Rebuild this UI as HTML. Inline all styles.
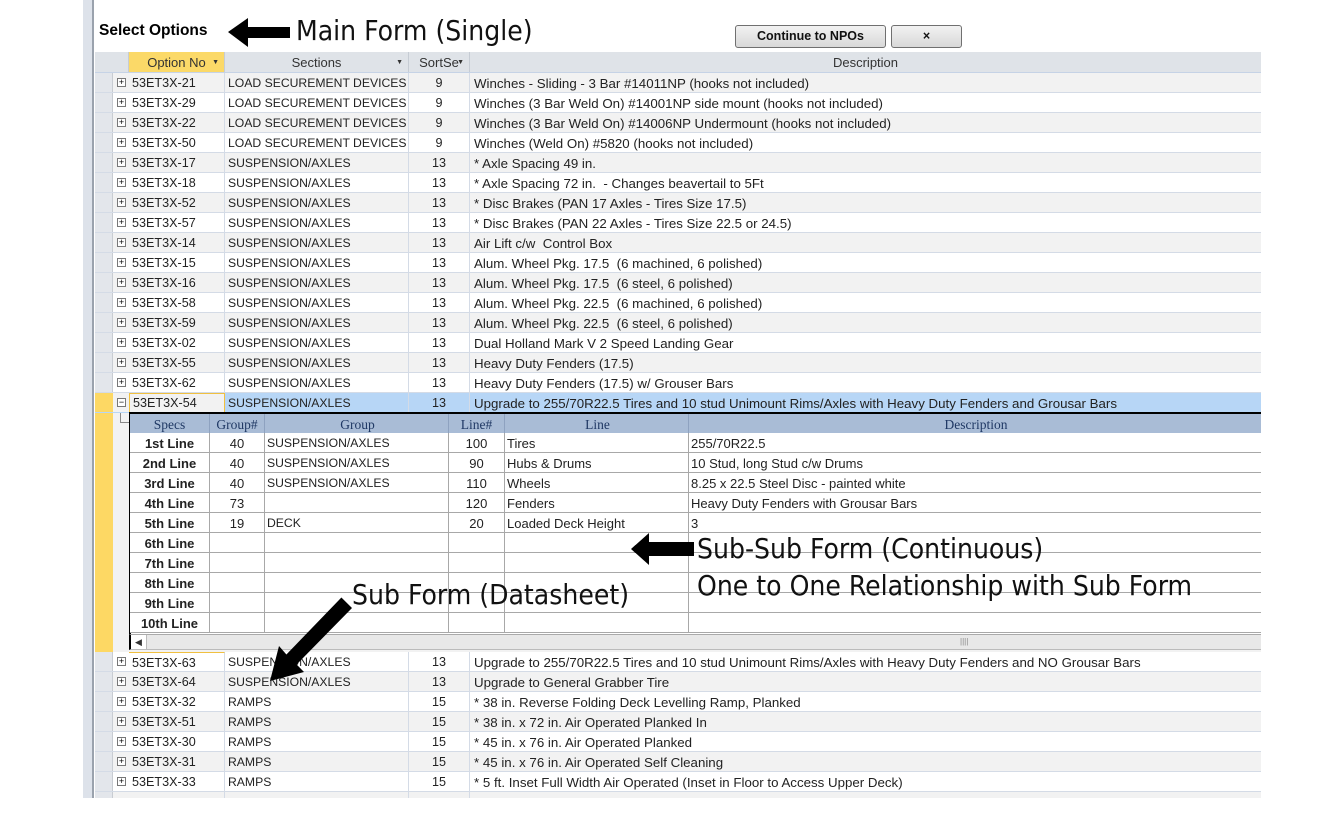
<!DOCTYPE html>
<html><head><meta charset="utf-8"><style>
*{margin:0;padding:0;box-sizing:border-box}
body{width:1344px;height:816px;background:#fff;position:relative;overflow:hidden;font-family:"Liberation Sans",sans-serif;font-size:12.6px;color:#222}
.abs{position:absolute}
.r{position:absolute;left:95px;width:1166px;height:20px;border-bottom:1px solid #d4dbe6;display:flex;line-height:21px}
.r div{height:19px;white-space:nowrap;overflow:hidden}
.sel{width:18px;background:#e3e6eb;border-right:1px solid #c8ccd2}
.ex{width:16px;position:relative}
.ex i{position:absolute;left:4px;top:5px;width:9px;height:9px;border:1px solid #777;background:#fff;font-style:normal;font-size:9px;line-height:7px;text-align:center;color:#000}
.op{width:96px;padding-left:3px;border-right:1px solid #d4dbe6}
.se{width:184px;padding-left:3px;border-right:1px solid #d4dbe6;font-size:12.2px}
.so{width:61px;text-align:center;border-right:1px solid #d4dbe6}
.de{width:791px;padding-left:4px;font-size:13.3px}
.g{background:#f2f2f2}
.w{background:#fff}
.hd{position:absolute;left:95px;top:52px;width:1166px;height:21px;background:#dfe3e8;border-bottom:1px solid #c6d3e6;display:flex;line-height:21px;color:#333;font-size:13px}
.hd div{height:20px;border-right:1px solid #c6ccd4;text-align:center;position:relative}
.dd{position:absolute;right:5px;top:0;font-size:7px}
.sr{position:absolute;left:130px;width:1131px;height:20px;display:flex;border-bottom:1px solid #a8a8a8;background:#fff;line-height:21px;font-size:13px}
.sr div{height:19px;border-right:1px solid #a8a8a8;white-space:nowrap;overflow:hidden}
.c1{width:80px;text-align:center;font-weight:bold}
.c2{width:55px;text-align:center}
.c3{width:184px;padding-left:2px;font-size:12.2px}
.c4{width:56px;text-align:center}
.c5{width:184px;padding-left:2px}
.c6{width:572px;padding-left:2px;border-right:none!important}
.ann{position:absolute;font-family:"DejaVu Sans Condensed","Liberation Sans",sans-serif;color:#111;font-size:28px;white-space:nowrap}
</style></head><body>
<div class="abs" style="left:83px;top:0;width:9px;height:798px;background:#dde2ea"></div>
<div class="abs" style="left:92px;top:0;width:2px;height:798px;background:#9aa2ad"></div>
<div class="abs" style="left:95px;top:0;width:1166px;height:52px;background:#fff"></div>
<div class="abs" style="left:99px;top:22px;font-weight:bold;font-size:15.5px;color:#000">Select Options</div>
<svg class="abs" style="left:226px;top:16px" width="66" height="34"><polygon points="2,16 22,2 22,11 64,11 64,22 22,22 22,31" fill="#000"/></svg>
<div class="ann" style="left:296px;top:14px">Main Form (Single)</div>
<div class="abs" style="left:735px;top:25px;width:151px;height:23px;border:1px solid #707070;border-radius:3px;background:linear-gradient(#f2f2f2,#d8d8d8);text-align:center;line-height:21px;font-weight:bold;font-size:12.5px;color:#111">Continue to NPOs</div>
<div class="abs" style="left:891px;top:25px;width:71px;height:23px;border:1px solid #707070;border-radius:3px;background:linear-gradient(#f2f2f2,#d8d8d8);text-align:center;line-height:21px;font-weight:bold;font-size:12.5px;color:#111">×</div>

<div class="hd"><div style="width:34px;background:#dfe3e8"></div><div style="width:96px;background:#fbd968">Option No<span class="dd">▼</span></div><div style="width:184px">Sections<span class="dd">▼</span></div><div style="width:61px">SortSe<span class="dd">▼</span></div><div style="width:791px;border:none">Description</div></div>

<div class="r g" style="top:73px"><div class="sel"></div><div class="ex"><i>+</i></div><div class="op">53ET3X-21</div><div class="se">LOAD SECUREMENT DEVICES</div><div class="so">9</div><div class="de">Winches - Sliding - 3 Bar #14011NP (hooks not included)</div></div>
<div class="r w" style="top:93px"><div class="sel"></div><div class="ex"><i>+</i></div><div class="op">53ET3X-29</div><div class="se">LOAD SECUREMENT DEVICES</div><div class="so">9</div><div class="de">Winches (3 Bar Weld On) #14001NP side mount (hooks not included)</div></div>
<div class="r g" style="top:113px"><div class="sel"></div><div class="ex"><i>+</i></div><div class="op">53ET3X-22</div><div class="se">LOAD SECUREMENT DEVICES</div><div class="so">9</div><div class="de">Winches (3 Bar Weld On) #14006NP Undermount (hooks not included)</div></div>
<div class="r w" style="top:133px"><div class="sel"></div><div class="ex"><i>+</i></div><div class="op">53ET3X-50</div><div class="se">LOAD SECUREMENT DEVICES</div><div class="so">9</div><div class="de">Winches (Weld On) #5820 (hooks not included)</div></div>
<div class="r g" style="top:153px"><div class="sel"></div><div class="ex"><i>+</i></div><div class="op">53ET3X-17</div><div class="se">SUSPENSION/AXLES</div><div class="so">13</div><div class="de">* Axle Spacing 49 in.</div></div>
<div class="r w" style="top:173px"><div class="sel"></div><div class="ex"><i>+</i></div><div class="op">53ET3X-18</div><div class="se">SUSPENSION/AXLES</div><div class="so">13</div><div class="de">* Axle Spacing 72 in.&nbsp; - Changes beavertail to 5Ft</div></div>
<div class="r g" style="top:193px"><div class="sel"></div><div class="ex"><i>+</i></div><div class="op">53ET3X-52</div><div class="se">SUSPENSION/AXLES</div><div class="so">13</div><div class="de">* Disc Brakes (PAN 17 Axles - Tires Size 17.5)</div></div>
<div class="r w" style="top:213px"><div class="sel"></div><div class="ex"><i>+</i></div><div class="op">53ET3X-57</div><div class="se">SUSPENSION/AXLES</div><div class="so">13</div><div class="de">* Disc Brakes (PAN 22 Axles - Tires Size 22.5 or 24.5)</div></div>
<div class="r g" style="top:233px"><div class="sel"></div><div class="ex"><i>+</i></div><div class="op">53ET3X-14</div><div class="se">SUSPENSION/AXLES</div><div class="so">13</div><div class="de">Air Lift c/w&nbsp; Control Box</div></div>
<div class="r w" style="top:253px"><div class="sel"></div><div class="ex"><i>+</i></div><div class="op">53ET3X-15</div><div class="se">SUSPENSION/AXLES</div><div class="so">13</div><div class="de">Alum. Wheel Pkg. 17.5&nbsp; (6 machined, 6 polished)</div></div>
<div class="r g" style="top:273px"><div class="sel"></div><div class="ex"><i>+</i></div><div class="op">53ET3X-16</div><div class="se">SUSPENSION/AXLES</div><div class="so">13</div><div class="de">Alum. Wheel Pkg. 17.5&nbsp; (6 steel, 6 polished)</div></div>
<div class="r w" style="top:293px"><div class="sel"></div><div class="ex"><i>+</i></div><div class="op">53ET3X-58</div><div class="se">SUSPENSION/AXLES</div><div class="so">13</div><div class="de">Alum. Wheel Pkg. 22.5&nbsp; (6 machined, 6 polished)</div></div>
<div class="r g" style="top:313px"><div class="sel"></div><div class="ex"><i>+</i></div><div class="op">53ET3X-59</div><div class="se">SUSPENSION/AXLES</div><div class="so">13</div><div class="de">Alum. Wheel Pkg. 22.5&nbsp; (6 steel, 6 polished)</div></div>
<div class="r w" style="top:333px"><div class="sel"></div><div class="ex"><i>+</i></div><div class="op">53ET3X-02</div><div class="se">SUSPENSION/AXLES</div><div class="so">13</div><div class="de">Dual Holland Mark V 2 Speed Landing Gear</div></div>
<div class="r g" style="top:353px"><div class="sel"></div><div class="ex"><i>+</i></div><div class="op">53ET3X-55</div><div class="se">SUSPENSION/AXLES</div><div class="so">13</div><div class="de">Heavy Duty Fenders (17.5)</div></div>
<div class="r w" style="top:373px"><div class="sel"></div><div class="ex"><i>+</i></div><div class="op">53ET3X-62</div><div class="se">SUSPENSION/AXLES</div><div class="so">13</div><div class="de">Heavy Duty Fenders (17.5) w/ Grouser Bars</div></div>
<div class="r" style="top:393px;background:#b7d6f6;border-bottom:none"><div class="sel" style="background:#fdd864;border:none"></div><div class="ex" style="background:#f2f2f2"><i>−</i></div><div class="op" style="background:#f2f2f2;border:1px solid #f0c040;height:20px;line-height:19px">53ET3X-54</div><div class="se">SUSPENSION/AXLES</div><div class="so">13</div><div class="de">Upgrade to 255/70R22.5 Tires and 10 stud Unimount Rims/Axles with Heavy Duty Fenders and Grousar Bars</div></div>
<div class="abs" style="left:95px;top:413px;width:18px;height:239px;background:#fdd864"></div>
<div class="abs" style="left:113px;top:413px;width:1148px;height:239px;background:#f2f2f2"></div>
<div class="abs" style="left:120px;top:413px;width:10px;height:10px;border-left:1px solid #888;border-bottom:1px solid #888"></div>
<div class="abs" style="left:129px;top:412px;width:1132px;height:222px;background:#fff;border-left:2px solid #000;border-top:2px solid #000"></div>
<div class="sr" style="top:414px;background:#a9bcd6;font-family:'Liberation Serif',serif;font-size:13.5px;color:#1f3864;border-bottom:1px solid #a8a8a8"><div class="c1" style="font-weight:normal;border-color:#8ea2c0">Specs</div><div class="c2" style="border-color:#8ea2c0">Group#</div><div class="c3" style="text-align:center;border-color:#8ea2c0;font-size:13.5px">Group</div><div class="c4" style="border-color:#8ea2c0">Line#</div><div class="c5" style="text-align:center;border-color:#8ea2c0">Line</div><div class="c6" style="text-align:center">Description</div></div>
<div class="sr" style="top:433px"><div class="c1">1st Line</div><div class="c2">40</div><div class="c3">SUSPENSION/AXLES</div><div class="c4">100</div><div class="c5">Tires</div><div class="c6">255/70R22.5</div></div>
<div class="sr" style="top:453px"><div class="c1">2nd Line</div><div class="c2">40</div><div class="c3">SUSPENSION/AXLES</div><div class="c4">90</div><div class="c5">Hubs &amp; Drums</div><div class="c6">10 Stud, long Stud c/w Drums</div></div>
<div class="sr" style="top:473px"><div class="c1">3rd Line</div><div class="c2">40</div><div class="c3">SUSPENSION/AXLES</div><div class="c4">110</div><div class="c5">Wheels</div><div class="c6">8.25 x 22.5 Steel Disc - painted white</div></div>
<div class="sr" style="top:493px"><div class="c1">4th Line</div><div class="c2">73</div><div class="c3"></div><div class="c4">120</div><div class="c5">Fenders</div><div class="c6">Heavy Duty Fenders with Grousar Bars</div></div>
<div class="sr" style="top:513px"><div class="c1">5th Line</div><div class="c2">19</div><div class="c3">DECK</div><div class="c4">20</div><div class="c5">Loaded Deck Height</div><div class="c6">3</div></div>
<div class="sr" style="top:533px"><div class="c1">6th Line</div><div class="c2"></div><div class="c3"></div><div class="c4"></div><div class="c5"></div><div class="c6"></div></div>
<div class="sr" style="top:553px"><div class="c1">7th Line</div><div class="c2"></div><div class="c3"></div><div class="c4"></div><div class="c5"></div><div class="c6"></div></div>
<div class="sr" style="top:573px"><div class="c1">8th Line</div><div class="c2"></div><div class="c3"></div><div class="c4"></div><div class="c5"></div><div class="c6"></div></div>
<div class="sr" style="top:593px"><div class="c1">9th Line</div><div class="c2"></div><div class="c3"></div><div class="c4"></div><div class="c5"></div><div class="c6"></div></div>
<div class="sr" style="top:613px"><div class="c1">10th Line</div><div class="c2"></div><div class="c3"></div><div class="c4"></div><div class="c5"></div><div class="c6"></div></div>
<div class="abs" style="left:129px;top:634px;width:1132px;height:16px;background:#e8e8e8;border-left:2px solid #000;border-top:1px solid #aaa;border-bottom:1px solid #bbb"></div>
<div class="abs" style="left:131px;top:635px;width:16px;height:14px;background:#fff;border-right:1px solid #bbb;font-size:9px;line-height:14px;text-align:center;color:#333">◀</div>
<div class="abs" style="left:960px;top:637px;font-size:8px;color:#888">||||</div>

<div class="r w" style="top:652px"><div class="sel"></div><div class="ex"><i>+</i></div><div class="op" style="border-top:1px solid #f0c040">53ET3X-63</div><div class="se">SUSPENSION/AXLES</div><div class="so">13</div><div class="de">Upgrade to 255/70R22.5 Tires and 10 stud Unimount Rims/Axles with Heavy Duty Fenders and NO Grousar Bars</div></div>
<div class="r g" style="top:672px"><div class="sel"></div><div class="ex"><i>+</i></div><div class="op">53ET3X-64</div><div class="se">SUSPENSION/AXLES</div><div class="so">13</div><div class="de">Upgrade to General Grabber Tire</div></div>
<div class="r w" style="top:692px"><div class="sel"></div><div class="ex"><i>+</i></div><div class="op">53ET3X-32</div><div class="se">RAMPS</div><div class="so">15</div><div class="de">* 38 in. Reverse Folding Deck Levelling Ramp, Planked</div></div>
<div class="r g" style="top:712px"><div class="sel"></div><div class="ex"><i>+</i></div><div class="op">53ET3X-51</div><div class="se">RAMPS</div><div class="so">15</div><div class="de">* 38 in. x 72 in. Air Operated Planked In</div></div>
<div class="r w" style="top:732px"><div class="sel"></div><div class="ex"><i>+</i></div><div class="op">53ET3X-30</div><div class="se">RAMPS</div><div class="so">15</div><div class="de">* 45 in. x 76 in. Air Operated Planked</div></div>
<div class="r g" style="top:752px"><div class="sel"></div><div class="ex"><i>+</i></div><div class="op">53ET3X-31</div><div class="se">RAMPS</div><div class="so">15</div><div class="de">* 45 in. x 76 in. Air Operated Self Cleaning</div></div>
<div class="r w" style="top:772px"><div class="sel"></div><div class="ex"><i>+</i></div><div class="op">53ET3X-33</div><div class="se">RAMPS</div><div class="so">15</div><div class="de">* 5 ft. Inset Full Width Air Operated (Inset in Floor to Access Upper Deck)</div></div>
<div class="r g" style="top:792px;height:6px;border:none"><div class="sel"></div><div class="ex"></div><div class="op"></div><div class="se"></div><div class="so"></div><div class="de"></div></div>
<div class="abs" style="left:0;top:798px;width:1344px;height:18px;background:#fff"></div>

<svg class="abs" style="left:628px;top:530px" width="68" height="38"><polygon points="3,19 21,3 21,12 66,12 66,26 21,26 21,35" fill="#000"/></svg>
<div class="ann" style="left:697px;top:532px">Sub-Sub Form (Continuous)</div>
<div class="ann" style="left:697px;top:569px">One to One Relationship with Sub Form</div>
<div class="ann" style="left:352px;top:578px">Sub Form (Datasheet)</div>
<svg class="abs" style="left:0;top:0;pointer-events:none" width="1344" height="816"><polygon points="341.4,597.5 352,608 296.6,664.5 304,672 270,681 279,646 286.4,654.5" fill="#000"/></svg>
</body></html>
